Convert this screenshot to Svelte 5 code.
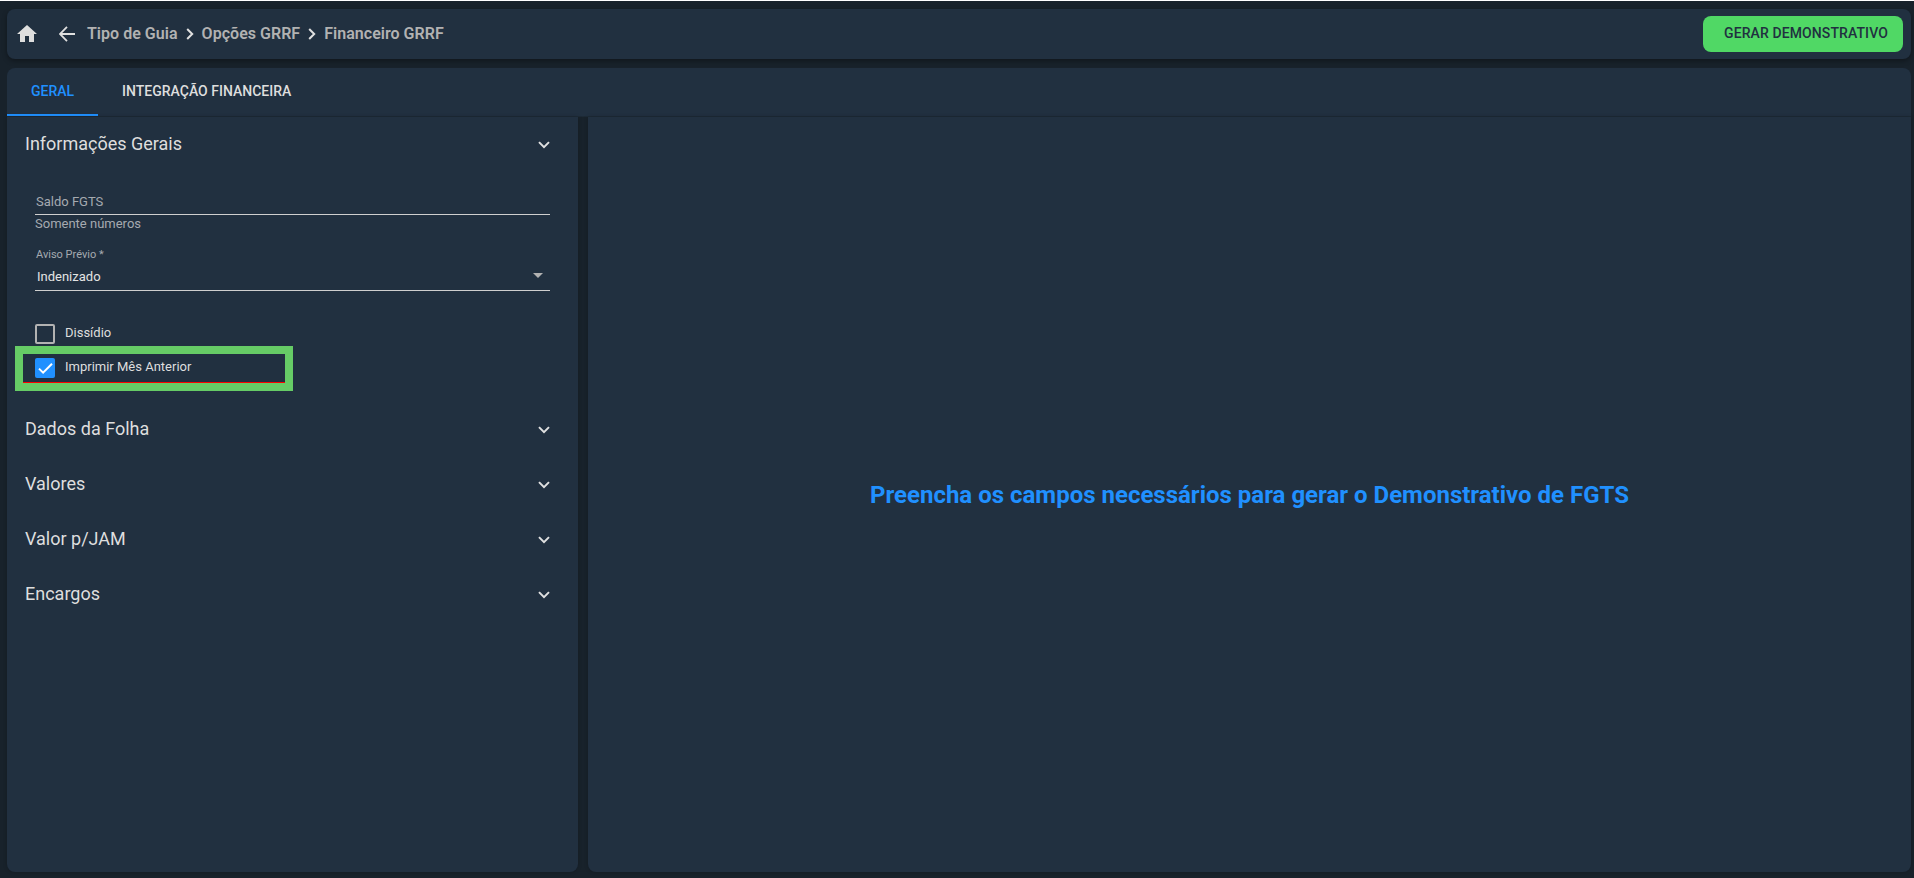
<script lang="ts">
	const breadcrumbs = ['Tipo de Guia', 'Opções GRRF', 'Financeiro GRRF']
	const tabs = ['Geral', 'Integração Financeira']
	const sections = ['Dados da Folha', 'Valores', 'Valor p/JAM', 'Encargos']

	let activeTab = $state('Geral')
	let dissidio = $state(false)
	let mesAnterior = $state(true)
</script>

{#snippet chevron()}
	<svg class="chevron" width="12" height="8" viewBox="0 0 12 8" aria-hidden="true">
		<path d="M1 1.1 6 6.1 11 1.1" />
	</svg>
{/snippet}

{#snippet checkbox(label: string, checked: boolean, toggle: () => void)}
	<button class="check" role="checkbox" aria-checked={checked} onclick={toggle}>
		<span class="box" class:checked>
			{#if checked}
				<svg width="20" height="20" viewBox="0 0 20 20" aria-hidden="true">
					<path d="M4 10.6 8.1 14.7 17 5.7" />
				</svg>
			{/if}
		</span>
		<span class="check-label">{label}</span>
	</button>
{/snippet}

<div class="page">
	<header class="toolbar">
		<svg class="home" width="24" height="24" viewBox="0 0 24 24" aria-hidden="true">
			<path d="M10 20v-6h4v6h5v-8h3L12 3 2 12h3v8z" />
		</svg>
		<svg class="back" width="16" height="16" viewBox="0 0 16 16" aria-hidden="true">
			<path d="M8 .9 .9 8 8 15.1M1 8H16" />
		</svg>
		<nav>
			{#each breadcrumbs as crumb, index (crumb)}
				{#if index > 0}
					<svg class="separator" width="8" height="12" viewBox="0 0 8 12" aria-hidden="true">
						<path d="M1.2 1 6.2 6 1.2 11" />
					</svg>
				{/if}
				<span>{crumb}</span>
			{/each}
		</nav>
		<button class="primary">GERAR DEMONSTRATIVO</button>
	</header>

	<div class="tabs" role="tablist">
		{#each tabs as tab (tab)}
			<button
				role="tab"
				aria-selected={tab === activeTab}
				class:active={tab === activeTab}
				onclick={() => (activeTab = tab)}
			>
				{tab}
			</button>
		{/each}
	</div>

	<main>
		<section class="panel form">
			<h2>Informações Gerais {@render chevron()}</h2>
			<div class="fields">
				<div class="input">Saldo FGTS</div>
				<small class="hint">Somente números</small>
				<small class="select-label">Aviso Prévio *</small>
				<div class="select">
					Indenizado
					<svg width="10" height="5" viewBox="0 0 10 5" aria-hidden="true">
						<path d="M0 0h10L5 5z" />
					</svg>
				</div>
				<div class="plain">
					{@render checkbox('Dissídio', dissidio, () => (dissidio = !dissidio))}
				</div>
			</div>
			<div class="highlight">
				{@render checkbox('Imprimir Mês Anterior', mesAnterior, () => (mesAnterior = !mesAnterior))}
			</div>
			{#each sections as section (section)}
				<h2>{section} {@render chevron()}</h2>
			{/each}
		</section>
		<section class="panel preview">
			<p>Preencha os campos necessários para gerar o Demonstrativo de FGTS</p>
		</section>
	</main>
</div>

<style>
	:global(body) {
		margin: 0;
		background: #18222b;
	}
	.page {
		box-sizing: border-box;
		height: 100vh;
		padding: 8px 3px 6px 7px;
		border-top: 1px solid #fff;
		display: flex;
		flex-direction: column;
		overflow: hidden;
		color: #dedede;
		font-family: Roboto, sans-serif;
	}
	button {
		border: 0;
		padding: 0;
		background: none;
		color: inherit;
		font: inherit;
	}
	svg {
		display: block;
		flex: none;
		fill: none;
		stroke: #e0e0e0;
		stroke-width: 2;
	}
	.toolbar {
		box-sizing: border-box;
		height: 50px;
		padding: 0 8px;
		display: flex;
		align-items: center;
		border-radius: 8px;
		background: #213040;
		box-shadow: 0 2px 5px rgb(0 0 0 / 35%);
	}
	.home {
		margin-top: -1px;
		fill: #dedede;
		stroke: none;
	}
	.back {
		margin-left: 20px;
		stroke-width: 1.8;
	}
	nav {
		margin: -2px auto 0 12px;
		display: flex;
		align-items: center;
		color: #b2b2b2;
		font-size: 16px;
		font-weight: 600;
		letter-spacing: 0.03px;
	}
	.separator {
		margin: 2px 8px 0;
	}
	.primary {
		width: 200px;
		height: 36px;
		padding: 0 0 2px 6px;
		border-radius: 8px;
		background: #50d865;
		color: #213040;
		font-size: 14px;
		font-weight: 500;
		letter-spacing: 0.1px;
	}
	.tabs {
		height: 48px;
		margin-top: 9px;
		display: flex;
		border-bottom: 1px solid #1d2a36;
		border-radius: 8px 8px 0 0;
		background: #213040;
	}
	.tabs button {
		padding: 0 24px;
		border-bottom: 2px solid transparent;
		font-size: 14px;
		font-weight: 500;
		text-transform: uppercase;
	}
	.tabs .active {
		border-color: #2090ff;
		color: #2090ff;
	}
	main {
		flex: 1;
		display: flex;
		gap: 10px;
	}
	.panel {
		border-radius: 0 0 8px 8px;
		background: #213040;
		box-shadow: 0 0 4px rgb(0 0 0 / 20%);
	}
	.form {
		width: 571px;
	}
	h2 {
		box-sizing: border-box;
		height: 55px;
		margin: 0;
		padding: 0 28px 2px 18px;
		display: flex;
		align-items: center;
		justify-content: space-between;
		font-size: 18px;
		font-weight: 400;
	}
	.chevron {
		margin-top: 3px;
	}
	.fields {
		margin: 0 28px;
		display: flex;
		flex-direction: column;
		color: #a5aab0;
		font-size: 13px;
		line-height: 16px;
	}
	.input {
		height: 20px;
		margin-top: 22px;
		padding-left: 1px;
		border-bottom: 1px solid #cfcfcf;
	}
	.hint {
		margin-top: 1px;
		font-size: 13px;
	}
	.select-label {
		margin-top: 15px;
		padding-left: 1px;
		font-size: 11px;
	}
	.select {
		height: 21px;
		margin-top: 6px;
		padding: 0 7px 0 2px;
		display: flex;
		justify-content: space-between;
		border-bottom: 1px solid #cfcfcf;
		color: #e4e4e4;
	}
	.select svg {
		margin-top: 4px;
		fill: #b2b2b2;
		stroke: none;
	}
	.plain {
		margin-top: 33px;
	}
	.check {
		display: flex;
		gap: 10px;
		color: #dedede;
		font-size: 13px;
		line-height: 16px;
	}
	.check-label {
		margin-top: 1px;
	}
	.box {
		box-sizing: border-box;
		width: 20px;
		height: 20px;
		border: 2px solid #b2b2b2;
		border-radius: 2px;
	}
	.box.checked {
		border: 0;
		background: #2090ff;
	}
	.box svg {
		stroke: #fff;
	}
	.highlight {
		box-sizing: border-box;
		width: 278px;
		height: 45px;
		margin: 2px 0 11px 8px;
		padding: 4px 12px 0;
		border: 8px solid #66cc66;
		box-shadow: inset 0 -1px red;
	}
	.preview {
		flex: 1;
		display: flex;
		align-items: center;
		justify-content: center;
	}
	p {
		margin: 0;
		color: #2090ff;
		font-size: 24px;
		font-weight: 700;
	}
</style>
